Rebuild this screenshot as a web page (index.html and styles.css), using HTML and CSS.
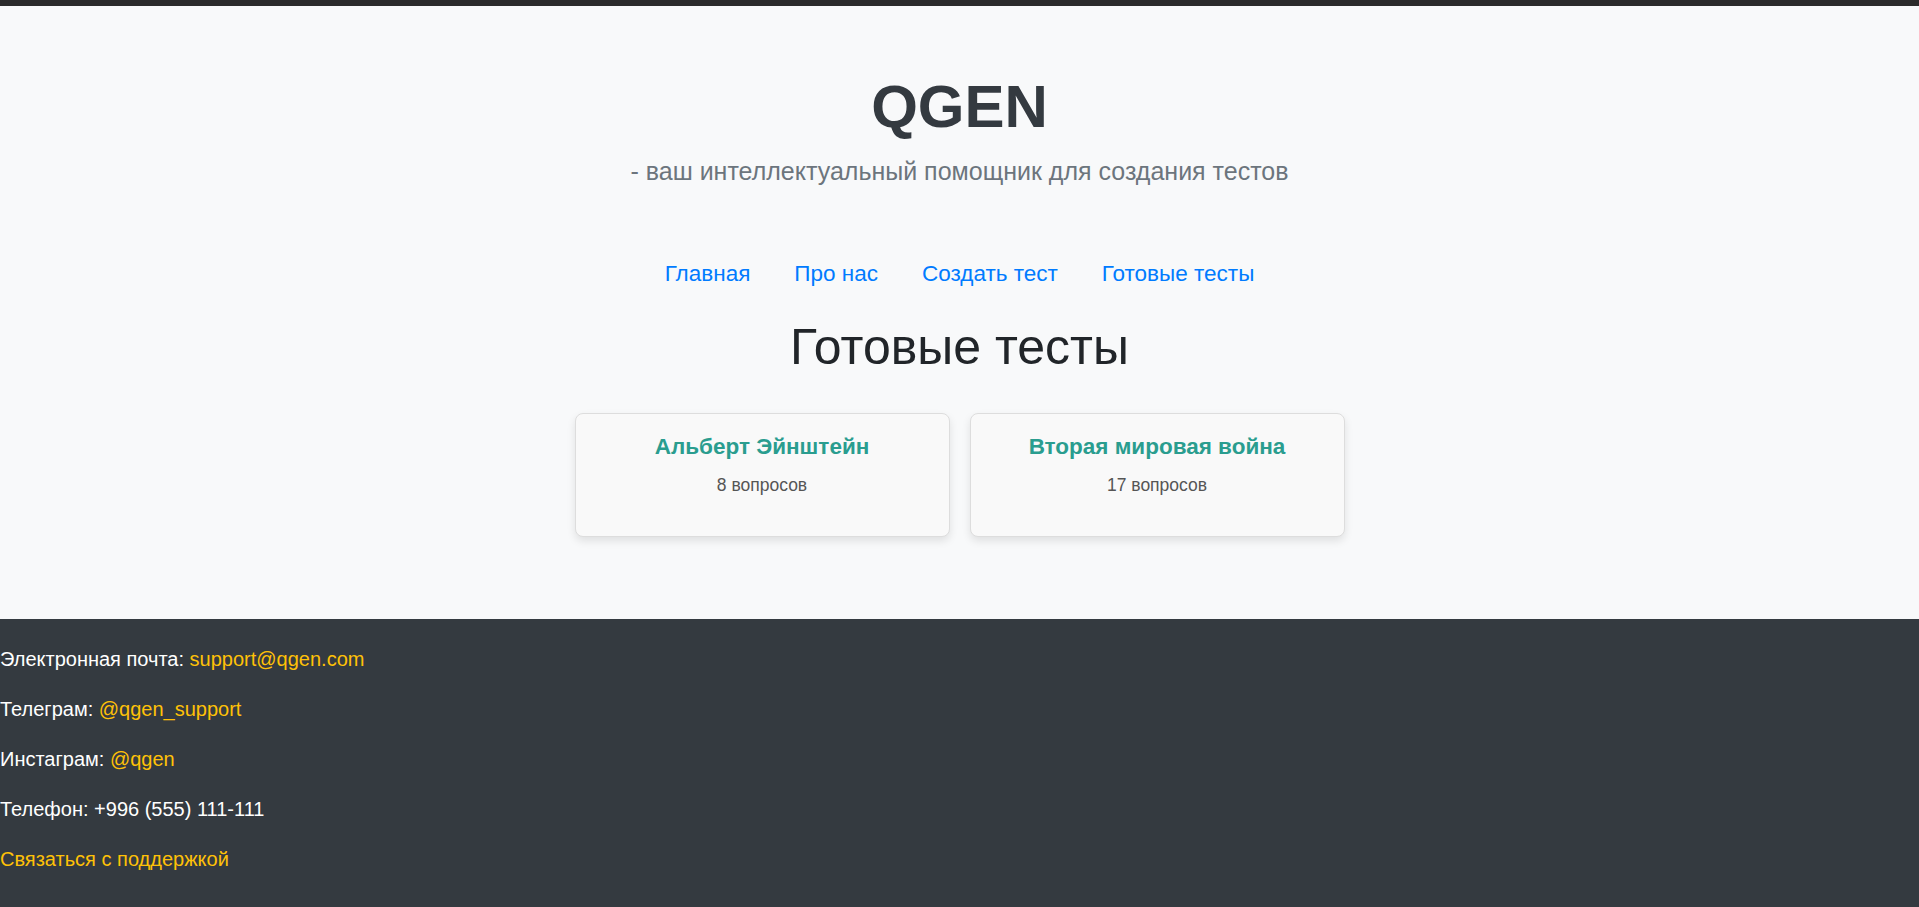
FILE: index.html
```html
<!DOCTYPE html>
<html lang="ru">
<head>
<meta charset="utf-8">
<title>QGEN</title>
<link rel="stylesheet" href="styles.css">
</head>
<body>
<div class="topbar"></div>
<main class="page">
  <header class="hero">
    <h1 class="brand">QGEN</h1>
    <p class="tagline">- ваш интеллектуальный помощник для создания тестов</p>
  </header>
  <nav class="nav">
    <a href="#">Главная</a>
    <a href="#">Про нас</a>
    <a href="#">Создать тест</a>
    <a href="#">Готовые тесты</a>
  </nav>
  <h2 class="section-title">Готовые тесты</h2>
  <div class="cards">
    <div class="card">
      <h3 class="card-title">Альберт Эйнштейн</h3>
      <p class="card-count">8 вопросов</p>
    </div>
    <div class="card">
      <h3 class="card-title">Вторая мировая война</h3>
      <p class="card-count">17 вопросов</p>
    </div>
  </div>
</main>
<footer class="footer">
  <p>Электронная почта: <a href="#">support@qgen.com</a></p>
  <p>Телеграм: <a href="#">@qgen_support</a></p>
  <p>Инстаграм: <a href="#">@qgen</a></p>
  <p>Телефон: +996 (555) 111-111</p>
  <p><a href="#">Связаться с поддержкой</a></p>
</footer>
</body>
</html>
```
FILE: styles.css
```css
* { box-sizing: border-box; }
html, body {
  margin: 0;
  padding: 0;
}
body {
  font-family: "Liberation Sans", Arial, sans-serif;
  background: #f8f9fa;
  color: #212529;
}
.topbar {
  height: 6px;
  background: #2b2b2b;
}
.page {
  display: flex;
  flex-direction: column;
  align-items: center;
  padding: 65px 0 82px;
}
.hero {
  text-align: center;
}
.brand {
  margin: 0;
  font-size: 60px;
  font-weight: 700;
  color: #343a40;
  line-height: 1.2;
}
.tagline {
  margin: 14px 0 0;
  font-size: 25px;
  color: #6c757d;
}
.nav {
  display: flex;
  gap: 44px;
  margin-top: 75px;
}
.nav a {
  font-size: 22.5px;
  color: #007bff;
  text-decoration: none;
}
.section-title {
  margin: 30px 0 0;
  font-size: 50px;
  font-weight: 400;
  color: #212529;
  line-height: 1.2;
}
.cards {
  display: flex;
  gap: 20px;
  margin-top: 36px;
}
.card {
  width: 375px;
  height: 124px;
  background: #f9f9f9;
  border: 1px solid #ddd;
  border-radius: 8px;
  box-shadow: 0 4px 8px rgba(0, 0, 0, 0.1);
  text-align: center;
  padding: 20px;
}
.card-title {
  margin: 0;
  font-size: 22.5px;
  font-weight: 700;
  color: #2a9d8f;
}
.card-count {
  margin: 15px 0 0;
  font-size: 17.5px;
  color: #555;
}
.footer {
  background: #343a40;
  color: #fff;
  padding: 15px 0 30px;
}
.footer p {
  margin: 0;
  padding: 15px 0;
  font-size: 20px;
  line-height: 20px;
}
.footer a {
  color: #ffc107;
  text-decoration: none;
}
```
